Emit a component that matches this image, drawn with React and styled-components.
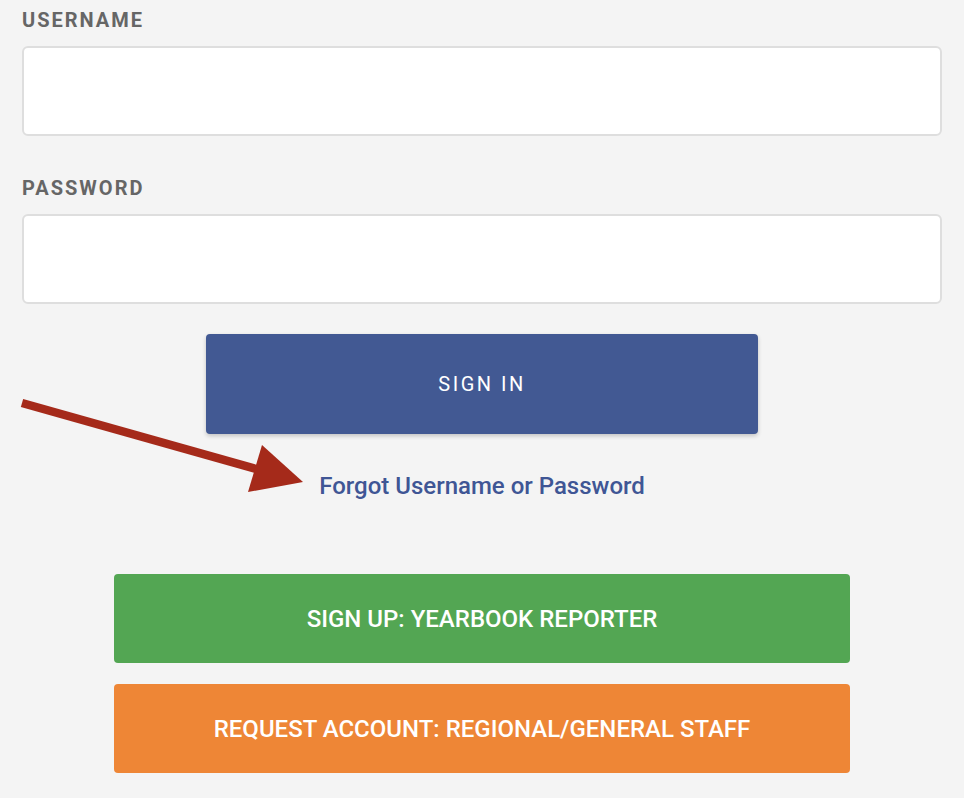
import React from 'react'
import styled, { createGlobalStyle } from 'styled-components'

const GlobalStyle = createGlobalStyle`
  html, body {
    margin: 0;
    padding: 0;
    background-color: #f4f4f4;
  }
  * {
    box-sizing: border-box;
  }
`

const Page = styled.div`
  position: relative;
  min-height: 798px;
  padding: 8px 22px 0;
  font-family: Roboto, 'Liberation Sans', sans-serif;
  background-color: #f4f4f4;
`

const Field = styled.div`
  display: flex;
  flex-direction: column;

  & + & {
    margin-top: 40px;
  }
`

const Label = styled.label`
  font-size: 20px;
  font-weight: 700;
  letter-spacing: 2px;
  color: #666;
  line-height: 24px;
  margin-bottom: 14px;
`

const Input = styled.input`
  height: 90px;
  width: 100%;
  border: 2px solid #dedede;
  border-radius: 6px;
  background: #fff;
  outline: none;
  font-size: 18px;
  padding: 0 16px;
`

const Actions = styled.div`
  display: flex;
  flex-direction: column;
  align-items: center;
  margin-top: 30px;
`

const SignInButton = styled.button`
  width: 552px;
  height: 100px;
  border: none;
  border-radius: 4px;
  background-color: #425993;
  color: #fff;
  font-family: Roboto, 'Liberation Sans', sans-serif;
  font-size: 20px;
  letter-spacing: 2.5px;
  box-shadow: 0 2px 4px rgba(0, 0, 0, 0.2);
  cursor: pointer;
`

const ForgotLink = styled.a`
  margin-top: 38px;
  font-size: 24px;
  font-weight: 500;
  color: #3f5695;
  text-decoration: none;
  line-height: 28px;
`

const WideButton = styled.button`
  width: 736px;
  height: 89px;
  border: none;
  border-radius: 4px;
  background-color: ${p => p.$color};
  color: #fff;
  font-family: Roboto, 'Liberation Sans', sans-serif;
  font-size: 24px;
  font-weight: 500;
  margin-top: ${p => p.$gap}px;
  cursor: pointer;
`

const Arrow = styled.svg`
  position: absolute;
  left: 0;
  top: 380px;
  pointer-events: none;
`

const App = () => (
  <Page>
    <GlobalStyle />
    <Field>
      <Label>USERNAME</Label>
      <Input type="text" />
    </Field>
    <Field>
      <Label>PASSWORD</Label>
      <Input type="password" />
    </Field>
    <Actions>
      <SignInButton>SIGN IN</SignInButton>
      <ForgotLink href="#">Forgot Username or Password</ForgotLink>
      <WideButton $color="#53a653" $gap={74}>SIGN UP: YEARBOOK REPORTER</WideButton>
      <WideButton $color="#ee8636" $gap={21}>REQUEST ACCOUNT: REGIONAL/GENERAL STAFF</WideButton>
    </Actions>
    {/* red arrow pointing at the forgot link */}
    <Arrow width="320" height="130" viewBox="0 0 320 130">
      <line x1="22" y1="23" x2="256" y2="89" stroke="#a52a1a" strokeWidth="8.5" />
      <polygon points="262,65 303,102 248,112" fill="#a52a1a" />
    </Arrow>
  </Page>
)

export default App
